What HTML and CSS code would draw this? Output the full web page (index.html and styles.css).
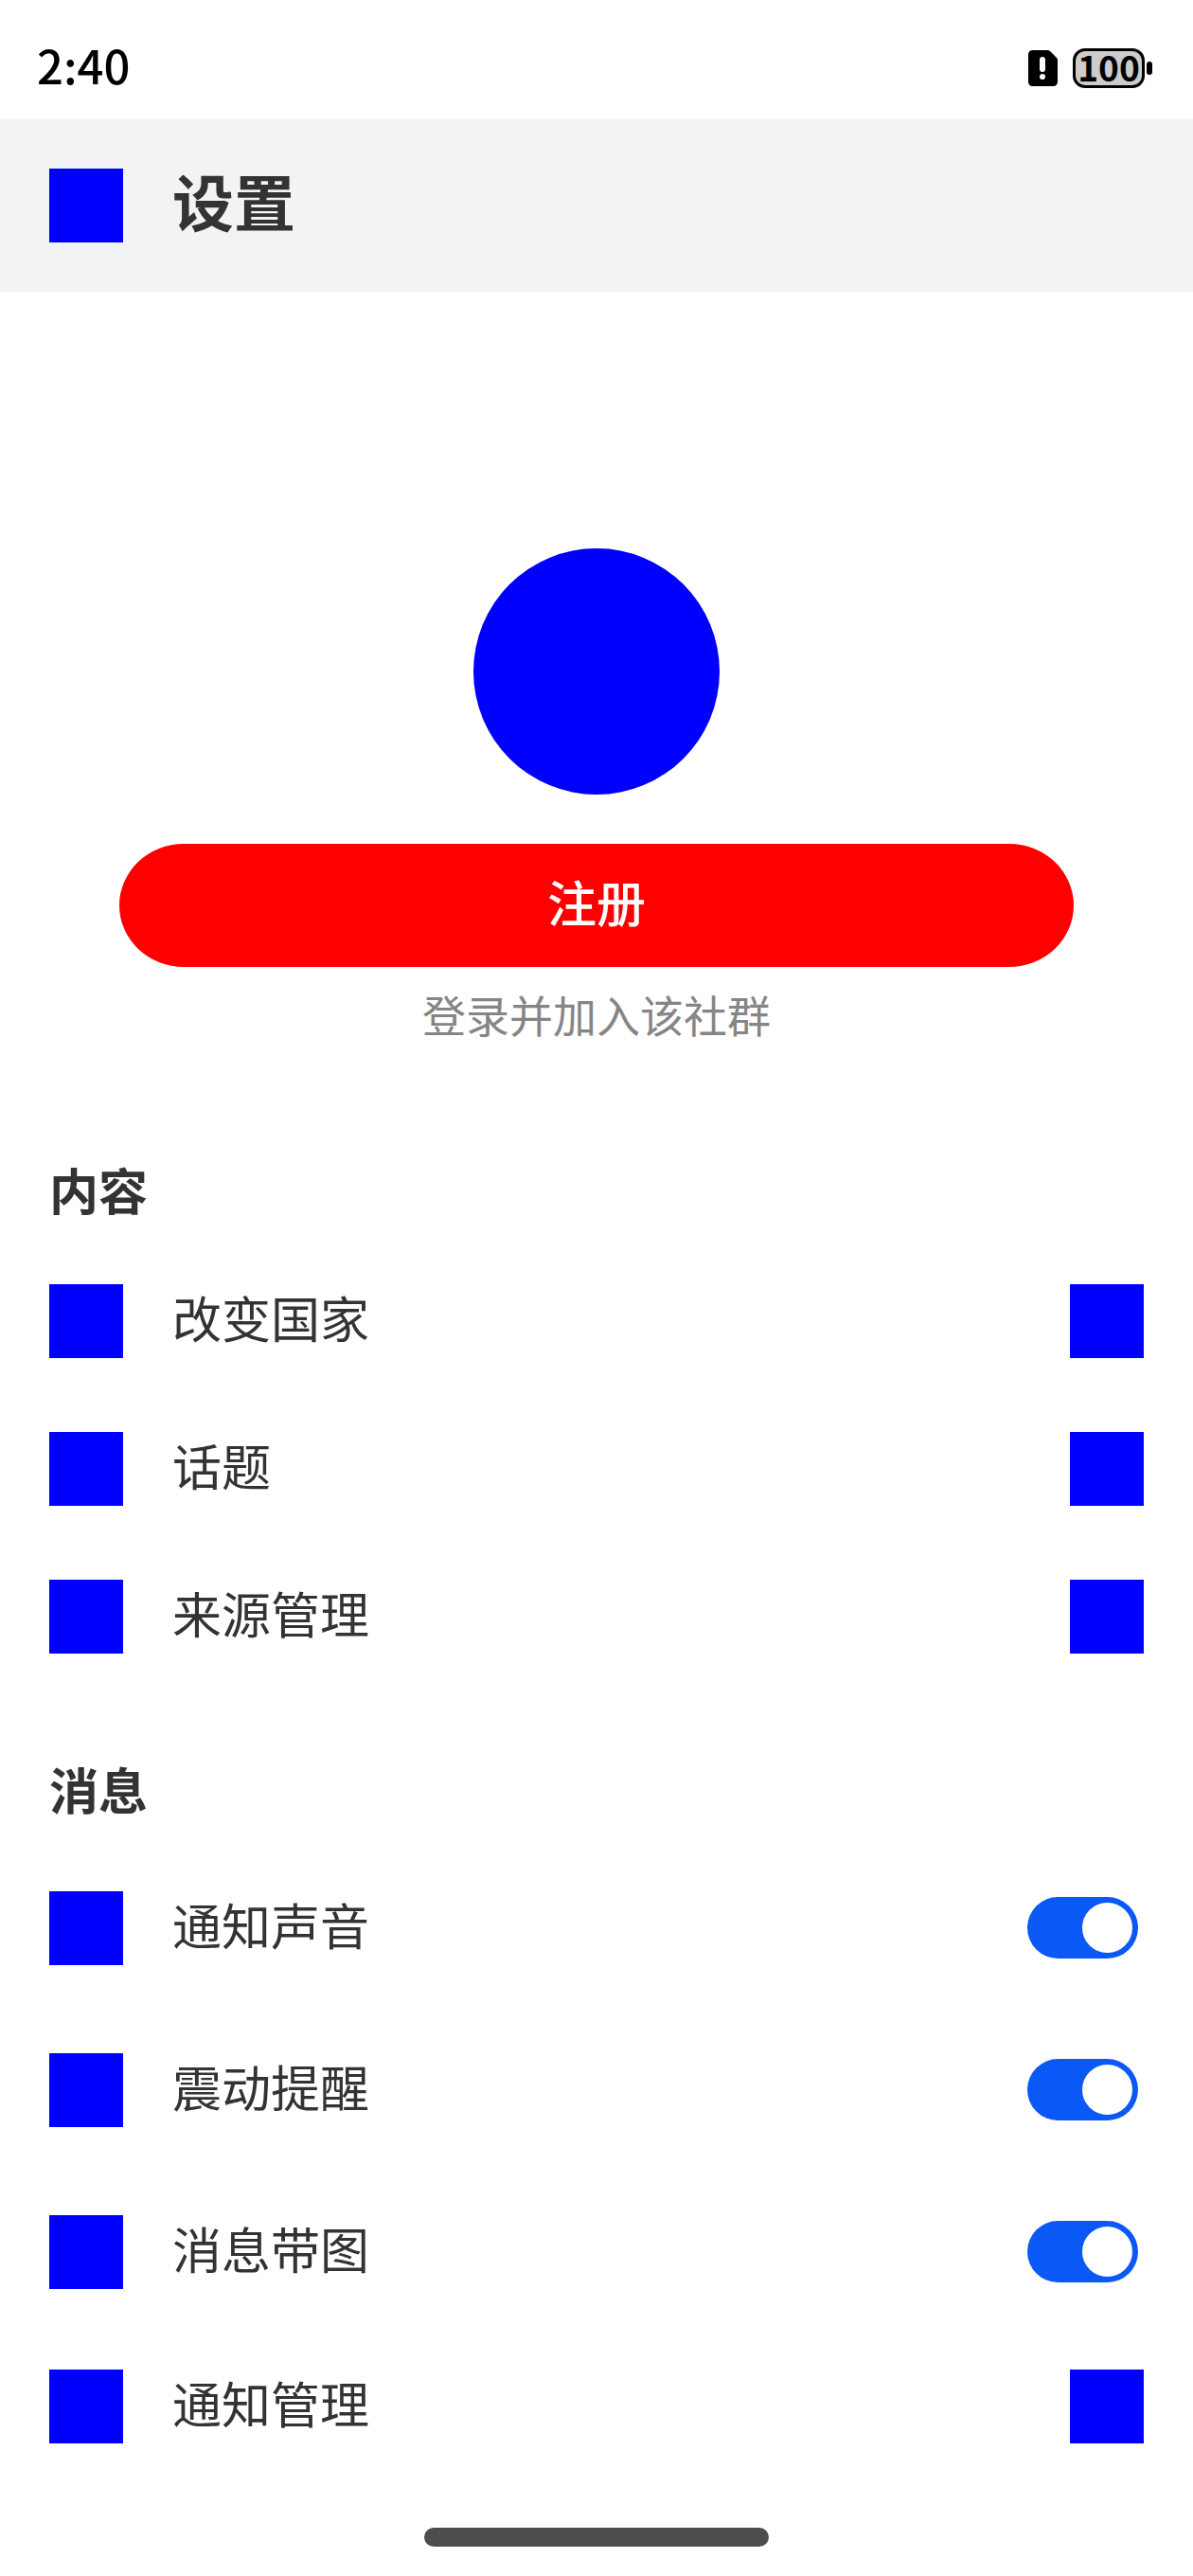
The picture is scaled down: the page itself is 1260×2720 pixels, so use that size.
FILE: index.html
```html
<!DOCTYPE html>
<html lang="zh-CN">
<head>
<meta charset="utf-8">
<meta name="viewport" content="width=device-width, initial-scale=1">
<title>设置</title>
<link rel="stylesheet" href="styles.css">
</head>
<body>
<div class="status-bar">
  <time class="clock">2:40</time>
  <div class="indicators">
    <svg class="sim" viewBox="0 0 31 38" role="img" aria-label="SIM">
      <path d="M5 0H20Q22 0 23 1L30 8Q31 9 31 11V33Q31 38 26 38H5Q0 38 0 33V5Q0 0 5 0Z" fill="#000"/>
      <rect x="12" y="7" width="6" height="16" rx="3" fill="#fff"/>
      <circle cx="15" cy="28" r="3" fill="#fff"/>
    </svg>
    <div class="battery">
      <span class="battery-level">100</span>
      <span class="battery-tip"></span>
    </div>
  </div>
</div>

<header class="app-bar">
  <button class="icon" type="button" aria-label="返回"></button>
  <h1 class="title">设置</h1>
</header>

<main class="content">
  <section class="account">
    <div class="avatar"></div>
    <button class="register" type="button">注册</button>
    <p class="hint">登录并加入该社群</p>
  </section>

  <section>
    <h2 class="group-title">内容</h2>
    <a class="row" href="#country"><span class="icon"></span><span class="label">改变国家</span><span class="icon"></span></a>
    <a class="row" href="#topics"><span class="icon"></span><span class="label">话题</span><span class="icon"></span></a>
    <a class="row" href="#sources"><span class="icon"></span><span class="label">来源管理</span><span class="icon"></span></a>
  </section>

  <section>
    <h2 class="group-title">消息</h2>
    <label class="row row-switch"><span class="icon"></span><span class="label">通知声音</span><input class="switch" type="checkbox" role="switch" checked></label>
    <label class="row row-switch"><span class="icon"></span><span class="label">震动提醒</span><input class="switch" type="checkbox" role="switch" checked></label>
    <label class="row row-switch"><span class="icon"></span><span class="label">消息带图</span><input class="switch" type="checkbox" role="switch" checked></label>
    <a class="row" href="#notifications"><span class="icon"></span><span class="label">通知管理</span><span class="icon"></span></a>
  </section>
</main>

<div class="home-indicator"></div>
</body>
</html>
```

FILE: styles.css
```css
* {
  box-sizing: border-box;
}

body {
  display: flex;
  flex-direction: column;
  min-height: 100vh;
  margin: 0;
  background: #fff;
  color: #333;
  font-family: "Noto Sans CJK SC", sans-serif;
  font-size: 52px;
  line-height: 60px;
}

h1,
h2,
p {
  margin: 0;
}

button {
  padding: 0;
  border: 0;
  font: inherit;
}

/* Status bar */
.status-bar {
  display: flex;
  align-items: center;
  justify-content: space-between;
  height: 126px;
  padding: 18px 43px 0 39px;
  color: #000;
}

.clock {
  padding-bottom: 8px;
  font-size: 49px;
  font-weight: 500;
}

.indicators {
  display: flex;
  align-items: center;
  gap: 16px;
}

.sim {
  width: 31px;
  height: 38px;
}

.battery {
  display: flex;
  align-items: center;
  gap: 2px;
}

.battery-level {
  display: flex;
  align-items: center;
  justify-content: center;
  width: 76px;
  height: 42px;
  padding-bottom: 4px;
  border: 3px solid #000;
  border-radius: 13px;
  background: #ccc;
  font-size: 37px;
  font-weight: 700;
  line-height: 36px;
}

.battery-tip {
  width: 6px;
  height: 14px;
  border-radius: 3px;
  background: #000;
}

/* App bar */
.app-bar {
  display: flex;
  align-items: center;
  gap: 52px;
  padding: 52px;
  background: #f1f3f5;
}

.icon {
  flex: none;
  width: 78px;
  height: 78px;
  background: #00f;
}

.title {
  padding-bottom: 12px;
  font-size: 65px;
  font-weight: 700;
  line-height: 66px;
}

/* Account */
.account {
  display: flex;
  flex-direction: column;
  align-items: center;
  padding: 271px 0 52px;
}

.avatar {
  width: 260px;
  height: 260px;
  border-radius: 50%;
  background: #00f;
}

.register {
  width: 80%;
  height: 130px;
  margin-top: 52px;
  padding-bottom: 8px;
  border-radius: 68px / 65px;
  background: #f00;
  color: #fff;
  font-weight: 500;
}

.hint {
  margin-top: 19px;
  color: #858585;
  font-size: 46px;
}

/* Setting groups */
.group-title {
  padding: 74px 52px 31px;
  font-size: 52px;
  font-weight: 700;
}

.row {
  display: flex;
  align-items: center;
  gap: 52px;
  min-height: 156px;
  padding: 0 52px;
  color: inherit;
  text-decoration: none;
}

.row-switch {
  min-height: 171px;
  padding-right: 58px;
}

.label {
  flex: 1;
  padding-bottom: 8px;
}

.switch {
  display: flex;
  align-items: center;
  justify-content: flex-end;
  flex: none;
  width: 117px;
  height: 65px;
  margin: 0;
  padding: 0 6px;
  border-radius: 33px;
  background: #ccc;
  appearance: none;
}

.switch::before {
  width: 53px;
  height: 53px;
  border-radius: 50%;
  background: #fff;
  content: "";
}

.switch:checked {
  background: #0a59f7;
}

.switch:not(:checked) {
  justify-content: flex-start;
}

/* Gesture bar */
.home-indicator {
  width: 364px;
  height: 20px;
  margin: auto auto 31px;
  border-radius: 10px;
  background: #4d4d4d;
}
```
